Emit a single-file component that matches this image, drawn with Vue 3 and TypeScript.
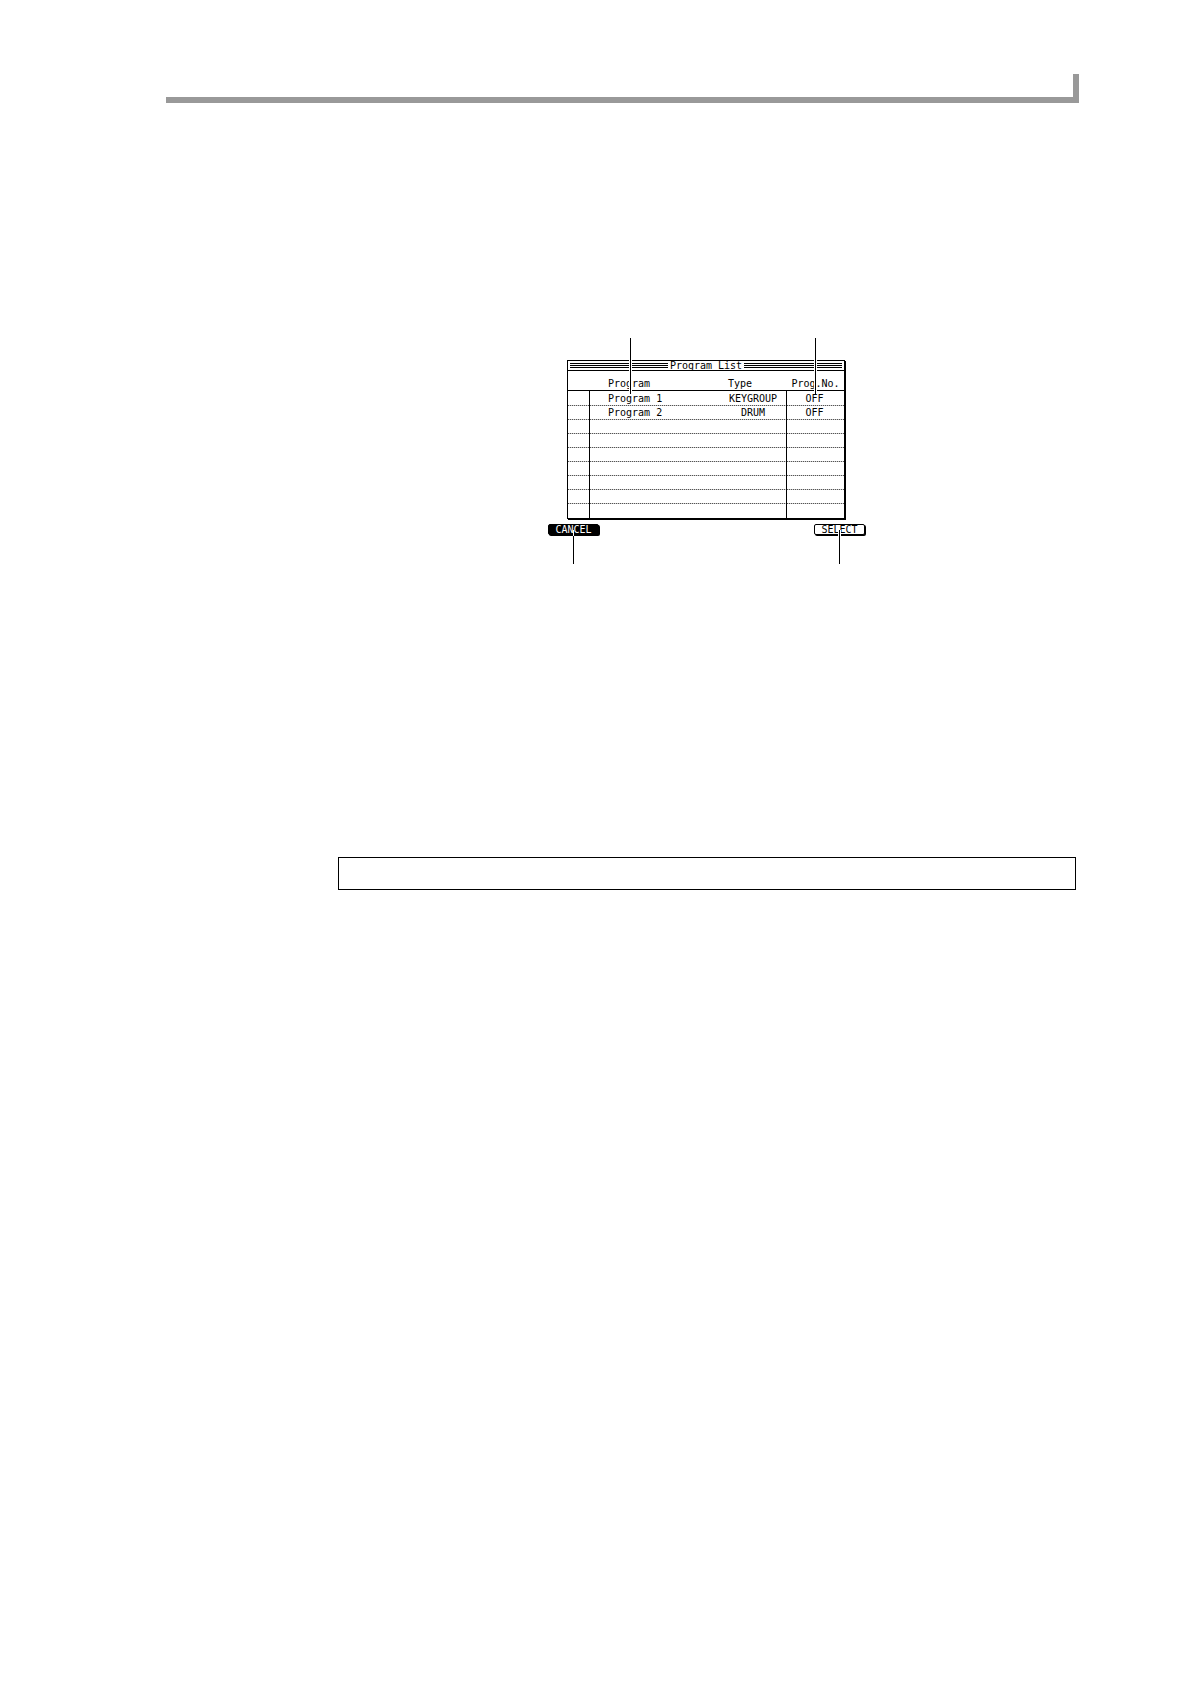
<script setup lang="ts">
interface ProgramRow {
  name: string
  type: string
  number: string
}

const programs: ProgramRow[] = [
  { name: 'Program 1', type: 'KEYGROUP', number: 'OFF' },
  { name: 'Program 2', type: 'DRUM', number: 'OFF' },
]

const emptyRows = 7
</script>

<template>
  <div class="page">
    <header class="page-header"></header>

    <main class="content">
      <section class="figure">
        <div class="window">
          <div class="title-bar">
            <span class="stripes"></span>
            <h1 class="title">Program List</h1>
            <span class="stripes"></span>
          </div>
          <table class="list">
            <colgroup>
              <col class="col-mark" />
              <col class="col-name" />
              <col class="col-type" />
              <col class="col-number" />
            </colgroup>
            <thead>
              <tr>
                <th></th>
                <th class="name">Program</th>
                <th class="type-head">Type</th>
                <th class="number">Prog.No.</th>
              </tr>
            </thead>
            <tbody>
              <tr v-for="program in programs" :key="program.name">
                <td></td>
                <td class="name">{{ program.name }}</td>
                <td class="type">{{ program.type }}</td>
                <td class="number">{{ program.number }}</td>
              </tr>
              <tr v-for="n in emptyRows" :key="n">
                <td></td>
                <td class="name"></td>
                <td class="type"></td>
                <td class="number"></td>
              </tr>
            </tbody>
          </table>
        </div>

        <div class="soft-keys">
          <button type="button" class="key key-dark">CANCEL</button>
          <button type="button" class="key">SELECT</button>
        </div>

        <i class="leader leader-name"></i>
        <i class="leader leader-number"></i>
        <i class="leader leader-cancel"></i>
        <i class="leader leader-select"></i>
      </section>

      <aside class="note"></aside>
    </main>
  </div>
</template>

<style>
body {
  margin: 0;
  background: #fff;
}
</style>

<style scoped>
.page {
  box-sizing: border-box;
  min-height: 100vh;
  padding: 74px 111px 0 166px;
  color: #000;
  font: 10px/12px "DejaVu Sans Mono", "Liberation Mono", monospace;
}

.page-header {
  box-sizing: border-box;
  height: 29px;
  border-right: 6px solid #999;
  background: linear-gradient(#999, #999) bottom / 100% 6px no-repeat;
}

.content {
  margin: 235px 3px 0 172px;
}

.figure {
  position: relative;
  width: 318px;
  height: 226px;
  margin: 0 auto;
  padding-top: 22px;
  box-sizing: border-box;
}

.window {
  box-sizing: border-box;
  width: 278px;
  margin-left: 19px;
  border: 1px solid #000;
  box-shadow: 1px 1px 0 #000;
}

.title-bar {
  display: flex;
  align-items: center;
  gap: 2px;
  height: 9px;
  padding: 0 2px;
  border-bottom: 1px solid #000;
}

.stripes {
  flex: 1;
  height: 5px;
  background: repeating-linear-gradient(#000 0 1px, #fff 1px 2px);
}

.title {
  margin: 0;
  font: inherit;
}

.list {
  width: 100%;
  table-layout: fixed;
  border-collapse: separate;
  border-spacing: 0;
}

.col-mark {
  width: 22px;
}

.col-type {
  width: 67px;
}

.col-number {
  width: 57px;
}

th,
td {
  box-sizing: border-box;
  padding: 0;
  font-weight: normal;
  text-align: left;
  white-space: nowrap;
}

th {
  height: 20px;
  padding-top: 6px;
  border-bottom: 1px solid #000;
}

td {
  height: 14px;
  line-height: 13px;
}

tbody tr:last-child td {
  height: 15px;
}

tbody tr + tr td {
  background: repeating-linear-gradient(90deg, #555 0 1px, #ccc 1px 2px) top / 100% 1px no-repeat;
}

td:first-child,
td.type {
  border-right: 1px solid #000;
}

.name {
  padding-left: 18px;
}

.type-head {
  padding-left: 8px;
}

.type,
.number {
  text-align: center;
}

td.number {
  padding-right: 2px;
}

.soft-keys {
  display: flex;
  justify-content: space-between;
  margin: 5px 1px 0 0;
}

.key {
  box-sizing: border-box;
  width: 51px;
  height: 11px;
  padding: 0;
  border: 1px solid #000;
  border-radius: 2px;
  background: #fff;
  box-shadow: 1px 1px 0 #000;
  color: #000;
  font: inherit;
  line-height: 9px;
}

.key-dark {
  background: #000;
  color: #fff;
}

.leader {
  position: absolute;
  width: 1px;
  background: #000;
  box-shadow: 1px 0 0 #fff, -1px 0 0 #fff;
}

.leader-name,
.leader-number {
  top: 0;
  height: 56px;
}

.leader-name {
  left: 82px;
}

.leader-number {
  right: 50px;
}

.leader-cancel,
.leader-select {
  bottom: 0;
  height: 34px;
}

.leader-cancel {
  left: 25px;
}

/* Inside the dark key the pointer reads as white, below it as black. */
.leader-cancel {
  background: linear-gradient(#fff 0 6px, #000 6px);
  box-shadow: none;
}

.leader-select {
  right: 26px;
}

.note {
  box-sizing: border-box;
  height: 33px;
  margin-top: 293px;
  border: 1px solid #000;
}
</style>
